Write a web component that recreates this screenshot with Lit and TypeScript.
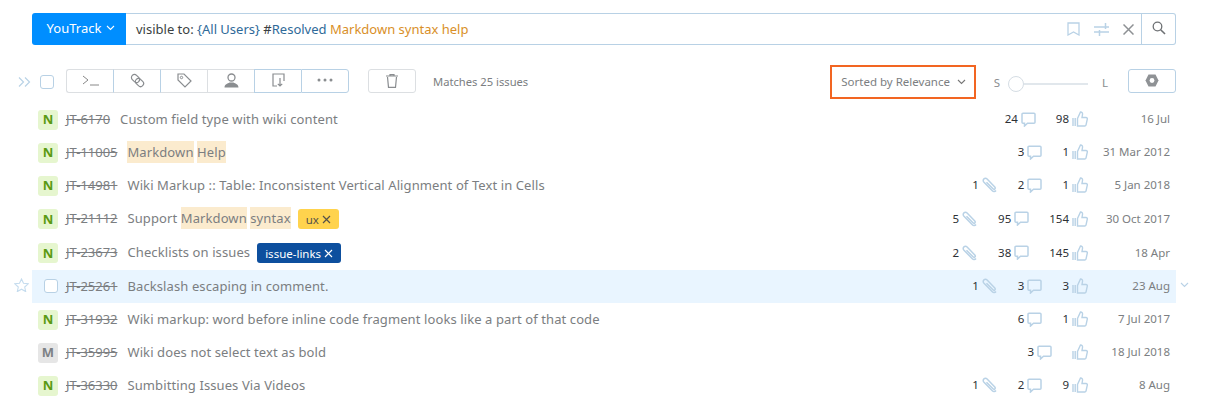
import { LitElement, html, css } from "lit";
import { customElement } from "lit/decorators.js";

const comment = html`<svg class="ic" width="15" height="15" viewBox="0 0 15 15"><path d="M2 1.200h11a1 1 0 0 1 1 1v8a1 1 0 0 1-1 1H6.500L3.500 14v-2.800H2a1 1 0 0 1-1-1v-8a1 1 0 0 1 1-1z" fill="none" stroke="#b9d2e6" stroke-width="1.500"/></svg>`;
const thumb = html`<svg class="ic" width="16" height="16" viewBox="0 0 16 16"><path d="M1 7v8M3.200 7v8M5.500 7.500 8.500 1c1.500 0 2.200 1 2 2.500L10 6.500h4c.9 0 1.500.7 1.300 1.600l-1.300 6c-.2.6-.6.9-1.200.9H5.500z" fill="none" stroke="#b9d2e6" stroke-width="1.400"/></svg>`;
const clip = html`<svg class="ic" width="16" height="16" viewBox="0 0 16 16"><path d="M14 13.500c-1 1.300-2.600 1.400-3.700.3L2 5.200C.9 4 1 2.700 1.900 1.900 2.800 1 4.100 1 5.100 2l7.700 8c.6.700.6 1.500.1 2-.6.500-1.300.4-1.900-.2L4.500 5.200" fill="none" stroke="#b9d2e6" stroke-width="1.500"/></svg>`;
const xIcon = html`<svg class="tagx" width="9" height="9" viewBox="0 0 9 9"><path d="M1 1l7 7M8 1l-7 7" stroke="currentColor" stroke-width="1.200" fill="none"/></svg>`;
const chev = (c: string) => html`<svg width="9" height="6" viewBox="0 0 9 6"><path d="M1 1l3.500 3.500L8 1" fill="none" stroke="${c}" stroke-width="1.100"/></svg>`;

type Row = {
  id: string; title: unknown; badge?: string; tag?: { t: string; c: string };
  a?: number; cm: number; v?: number; d: string; hover?: boolean;
};
const hl = (s: string) => html`<span class="hl">${s}</span>`;
const rows: Row[] = [
  { id: "JT-6170", title: "Custom field type with wiki content", badge: "N", cm: 24, v: 98, d: "16 Jul" },
  { id: "JT-11005", title: html`${hl("Markdown")} ${hl("Help")}`, badge: "N", cm: 3, v: 1, d: "31 Mar 2012" },
  { id: "JT-14981", title: "Wiki Markup :: Table: Inconsistent Vertical Alignment of Text in Cells", badge: "N", a: 1, cm: 2, v: 1, d: "5 Jan 2018" },
  { id: "JT-21112", title: html`Support ${hl("Markdown")} ${hl("syntax")}`, badge: "N", tag: { t: "ux", c: "ux" }, a: 5, cm: 95, v: 154, d: "30 Oct 2017" },
  { id: "JT-23673", title: "Checklists on issues", badge: "N", tag: { t: "issue-links", c: "il" }, a: 2, cm: 38, v: 145, d: "18 Apr" },
  { id: "JT-25261", title: "Backslash escaping in comment.", hover: true, a: 1, cm: 3, v: 3, d: "23 Aug" },
  { id: "JT-31932", title: "Wiki markup: word before inline code fragment looks like a part of that code", badge: "N", cm: 6, v: 1, d: "7 Jul 2017" },
  { id: "JT-35995", title: "Wiki does not select text as bold", badge: "M", cm: 3, d: "18 Jul 2018" },
  { id: "JT-36330", title: "Sumbitting Issues Via Videos", badge: "N", a: 1, cm: 2, v: 9, d: "8 Aug" },
];

@customElement("app-root")
export class AppRoot extends LitElement {
  static styles = css`
    :host { display: block; width: 1208px; height: 400px; overflow: hidden; background: #fff;
      font-family: "Noto Sans", sans-serif; font-size: 13px; color: #7b7e81; }
    svg { display: block; flex: none; }
    .search { display: flex; height: 32px; margin: 13px 32px 0; }
    .ctx { width: 94px; background: #008eff; color: #fff; border-radius: 3px 0 0 3px; display: flex;
      align-items: center; justify-content: center; gap: 5px; font-size: 13px; padding-bottom: 2px; box-sizing: border-box; padding-left: 4px; }
    .input { flex: 1; display: flex; align-items: center; border: 1px solid #b8d1e5; border-left: 0; padding: 0 0 0 10px; }
    .q { flex: 1; white-space: nowrap; color: #3b3f42; }
    .q .b { color: #2f6a99; } .q .o { color: #d98f28; }
    .q-icons { display: flex; align-items: center; margin-right: 7px; }
    .i1, .i2 { margin-right: 14px; }
    .go { width: 34px; box-sizing: border-box; border: 1px solid #b8d1e5; border-left: 0; border-radius: 0 3px 3px 0;
      display: flex; align-items: center; justify-content: center; padding-bottom: 3px; }
    .bar { display: flex; align-items: center; height: 34px; margin: 20px 32px 4px 18px; }
    .exp { width: 22px; }
    .cb { width: 14px; height: 14px; border: 1px solid #b8d1e5; border-radius: 3px; box-sizing: border-box; background: #fff; flex: none; }
    .bar .cb { margin-right: 12px; }
    .group { display: flex; height: 24px; margin-bottom: 2px; }
    .btn { width: 47px; box-sizing: border-box; height: 24px; border: 1px solid #dcdfe2; border-right: 0;
      display: flex; align-items: center; justify-content: center; padding-bottom: 2px; }
    .btn:first-child { border-radius: 3px 0 0 3px; }
    .btn:last-child { border-radius: 0 3px 3px 0; border-right: 1px solid #b8d1e5; width: 48px; }
    .btn.bl { border-left-color: #b8d1e5; }
    .btn.all { border-top-color: #b8d1e5; border-bottom-color: #b8d1e5; }
    .trash { width: 48px; height: 24px; box-sizing: border-box; border: 1px solid #dcdfe2; border-radius: 3px; margin: 0 0 2px 19px;
      display: flex; align-items: center; justify-content: center; }
    .matches { margin-left: 17px; font-size: 11.200px; padding-bottom: 2px; }
    .sort { margin-left: auto; width: 146px; height: 34px; box-sizing: border-box; border: 2px solid #f26522;
      display: flex; align-items: center; justify-content: center; gap: 7px; font-size: 11.500px; padding-bottom: 1px; padding-left: 2px; }
    .s { font-size: 11.500px; color: #8a8d90; margin-left: 18px; }
    .slider { display: flex; align-items: center; margin-left: 8px; margin-top: 4px; }
    .thumb { width: 16px; height: 16px; box-sizing: border-box; border: 1px solid #d5dde4; border-radius: 50%; background: #fff; }
    .track { width: 64px; height: 2px; background: #e1e7ec; }
    .l { font-size: 11.500px; color: #8a8d90; margin-left: 14px; margin-right: 20px; }
    .cfg { width: 48px; height: 24px; box-sizing: border-box; border: 1px solid #b8d1e5; border-radius: 3px; margin-bottom: 2px;
      display: flex; align-items: center; justify-content: center; padding-bottom: 2px; }
    .row { display: flex; align-items: stretch; }
    .gut { width: 32px; display: flex; align-items: center; flex: none; box-sizing: border-box; padding-bottom: 3px; }
    .gut.left { padding-left: 14px; }
    .gut.right { padding-left: 4px; }
    .main { flex: 1; display: flex; align-items: center; height: 33px; box-sizing: border-box; padding: 0 6px 2px; white-space: nowrap; min-width: 0; }
    .row.hover .main { background: #e9f5ff; }
    .tagrow .main { height: 34px; }
    .badge { width: 20px; height: 20px; border-radius: 3px; display: flex; align-items: center; justify-content: center;
      font-weight: 700; font-size: 13px; background: #e6f6cf; color: #5a9a12; flex: none; margin-top: 2px; padding-bottom: 1px; box-sizing: border-box; }
    .badge.M { background: #e6e6e6; color: #7d8185; }
    .slot { width: 20px; display: flex; justify-content: center; flex: none; margin-left: 3px; margin-right: -3px; }
    .id { margin-left: 8px; text-decoration: line-through; margin-right: 10px; font-size: 13px; letter-spacing: -.02px; }
    .title { letter-spacing: .1px; }
    .hl { background: #fbebce; padding: 2px 0; }
    .tag { margin-left: 7px; height: 20px; border-radius: 3px; display: inline-flex; align-items: center; gap: 3px;
      padding: 0 8px; font-size: 11.500px; margin-top: 2px; box-sizing: border-box; }
    .tag.ux { background: #ffd34d; color: #55514a; }
    .tag.il { background: #0d4f9e; color: #fff; }
    .meta { margin-left: auto; display: flex; align-items: center; }
    .m { display: flex; align-items: center; gap: 3px; margin-left: 20px; color: #2d3136; font-size: 11.500px; }
    .m svg { margin-top: 1px; }
    .date { width: 82px; text-align: right; font-size: 11.500px; }
    .ic { display: block; }
  `;

  render() {
    return html`
      <div class="search">
        <div class="ctx">YouTrack ${chev("#fff")}</div>
        <div class="input">
          <span class="q">visible to: <span class="b">{All Users}</span> #<span class="b">Resolved</span> <span class="o">Markdown syntax help</span></span>
          <span class="q-icons">
            <svg class="i1" width="13" height="14" viewBox="0 0 13 14"><path d="M1 1h11v12l-5.500-3L1 13z" fill="none" stroke="#b9d2e6" stroke-width="1.300"/></svg>
            <svg class="i2" width="15" height="13" viewBox="0 0 15 13"><path d="M0 4h15M0 9h15M11.500 0v6M5.500 7v6" fill="none" stroke="#b9d2e6" stroke-width="1.500"/></svg>
            <svg width="11" height="11" viewBox="0 0 11 11"><path d="M.5.500l10 10M10.500.500l-10 10" fill="none" stroke="#8e9194" stroke-width="1.500"/></svg>
          </span>
        </div>
        <div class="go"><svg width="14" height="14" viewBox="0 0 14 14"><circle cx="5.500" cy="5.500" r="4.300" fill="none" stroke="#6e7174" stroke-width="1.300"/><path d="M8.700 8.700 13 13" stroke="#6e7174" stroke-width="1.600"/></svg></div>
      </div>
      <div class="bar">
        <div class="exp"><svg width="13" height="10" viewBox="0 0 13 10"><path d="M1 .5l4.500 4.500L1 9.500M7 .5l4.500 4.500L7 9.500" fill="none" stroke="#b9d2e6" stroke-width="1.200"/></svg></div>
        <div class="cb"></div>
        <div class="group">
          <div class="btn"><svg width="17" height="11" viewBox="0 0 17 11"><path d="M1 1l5 4-5 4M8 10h9" fill="none" stroke="#888" stroke-width="1"/></svg></div>
          <div class="btn bl"><svg width="15" height="15" viewBox="0 0 15 15"><rect x="1" y="2.500" width="9" height="6" rx="3" transform="rotate(45 5.500 5.500)" fill="none" stroke="#8a8d90" stroke-width="1.200"/><rect x="5" y="6.500" width="9" height="6" rx="3" transform="rotate(45 9.500 9.500)" fill="none" stroke="#8a8d90" stroke-width="1.200"/></svg></div>
          <div class="btn bl"><svg width="15" height="15" viewBox="0 0 15 15"><path d="M1 1h6l7 7-6 6-7-7z" fill="none" stroke="#8a8d90" stroke-width="1.200"/><circle cx="4.500" cy="4.500" r="1.200" fill="none" stroke="#8a8d90"/></svg></div>
          <div class="btn"><svg width="15" height="15" viewBox="0 0 15 15"><circle cx="7.500" cy="4.500" r="3.500" fill="none" stroke="#8a8d90" stroke-width="1.300"/><path d="M0.500 14.500c0-3 3-4 5-5h4c2 1 5 2 5 5z" fill="#8a8d90"/></svg></div>
          <div class="btn bl all"><svg width="13" height="14" viewBox="0 0 13 14"><path d="M5 13H1V1h11v7" fill="none" stroke="#8a8d90" stroke-width="1.200"/><path d="M8 5v8M5.800 10.800 8 13l2.200-2.200" fill="none" stroke="#8a8d90" stroke-width="1.200"/></svg></div>
          <div class="btn bl all"><svg width="16" height="4" viewBox="0 0 16 4"><circle cx="2" cy="2" r="1.500" fill="#8a8d90"/><circle cx="8" cy="2" r="1.500" fill="#8a8d90"/><circle cx="14" cy="2" r="1.500" fill="#8a8d90"/></svg></div>
        </div>
        <div class="trash"><svg width="12" height="14" viewBox="0 0 12 14"><path d="M0 2h12M4 2V.6h4V2M1.500 3l1 10.400h7l1-10.400" fill="none" stroke="#8a8d90" stroke-width="1.200"/></svg></div>
        <div class="matches">Matches 25 issues</div>
        <div class="sort">Sorted by Relevance ${chev("#777")}</div>
        <div class="s">S</div>
        <div class="slider"><div class="thumb"></div><div class="track"></div></div>
        <div class="l">L</div>
        <div class="cfg"><svg width="14" height="13" viewBox="0 0 14 13"><path d="M3.500.5h7L13.500 6.500l-3 6h-7L.5 6.500z" fill="#8f9295"/><circle cx="7" cy="6.500" r="2.400" fill="#fff"/></svg></div>
      </div>
      ${rows.map((r) => html`
        <div class="row ${r.hover ? "hover" : ""} ${r.tag ? "tagrow" : ""}">
          <div class="gut left">${r.hover ? html`<svg width="15" height="14" viewBox="0 0 15 14"><path d="M7.500 1l2 4.300 4.700.5-3.500 3.200 1 4.600-4.200-2.400-4.200 2.400 1-4.600L.8 5.800l4.700-.5z" fill="none" stroke="#c5dcee" stroke-width="1.100"/></svg>` : ""}</div>
          <div class="main">
            ${r.badge ? html`<div class="badge ${r.badge}">${r.badge}</div>` : html`<div class="slot"><div class="cb"></div></div>`}
            <span class="id">${r.id}</span>
            <span class="title">${r.title}</span>
            ${r.tag ? html`<span class="tag ${r.tag.c}">${r.tag.t} ${xIcon}</span>` : ""}
            <div class="meta">
              ${r.a ? html`<div class="m">${r.a}${clip}</div>` : ""}
              <div class="m">${r.cm}${comment}</div>
              <div class="m">${r.v ?? ""}${thumb}</div>
              <div class="date">${r.d}</div>
            </div>
          </div>
          <div class="gut right">${r.hover ? chev("#b9d2e6") : ""}</div>
        </div>`)}
    `;
  }
}
